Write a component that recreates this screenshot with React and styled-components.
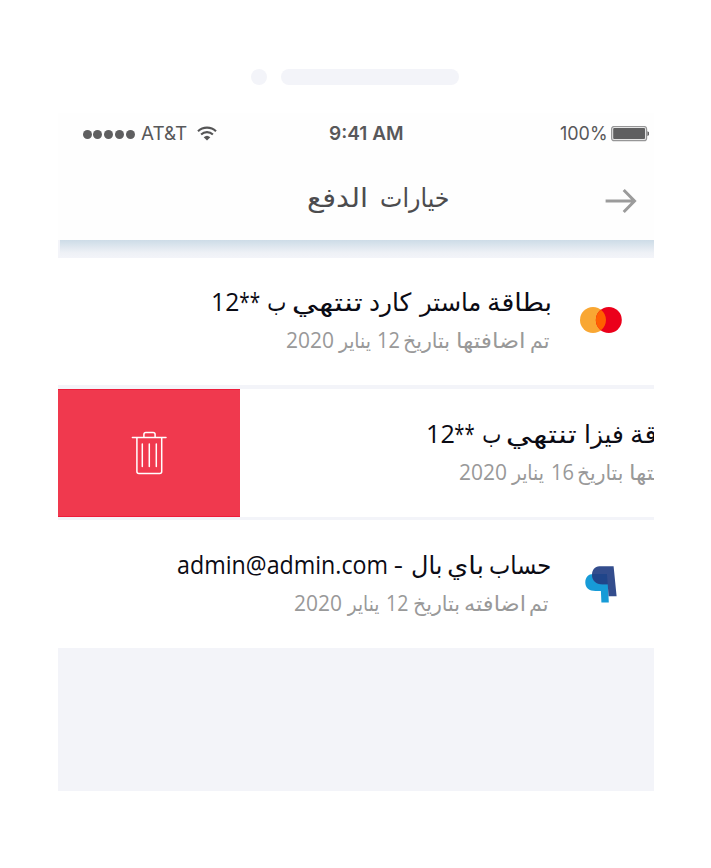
import React, { useLayoutEffect, useRef, useState } from "react";
import styled, { createGlobalStyle } from "styled-components";

const Global = createGlobalStyle`
  * { box-sizing: border-box; }
  body { margin: 0; background: #fff; }
`;

const Page = styled.div`
  width: 711px;
  height: 868px;
  padding: 69px 57px 0 58px;
  overflow: hidden;
  background: #fff;
  font-family: "Open Sans", "DejaVu Sans", sans-serif;
`;
const Earpiece = styled.div`
  display: flex;
  gap: 14px;
  height: 16px;
  margin: 0 0 28px 193.4px;
`;
const Slot = styled.div`
  width: ${(p) => p.$width}px;
  height: 16px;
  border-radius: 8px;
  background: #f3f4f9;
`;
const Screen = styled.main`
  width: 596px;
  height: 678px;
  overflow: hidden;
  background: #f3f4f9;
`;
const Header = styled.header`
  height: 127px;
  background: #fefefe;
`;
const StatusBar = styled.div`
  display: flex;
  align-items: center;
  height: 42px;
  padding: 0 5.5px 0 24.5px;
  color: #58585a;
  font: 400 19px/24px Inter, sans-serif;
`;
const Carrier = styled.div`
  display: flex;
  align-items: center;
  width: 246.5px;
`;
const Signal = styled.div`
  display: flex;
  gap: 1.9px;
  margin-right: 6px;
`;
const Dot = styled.i`
  width: 9px;
  height: 9px;
  border-radius: 50%;
  background: #5f5f60;
`;
const WifiIcon = styled.svg`
  margin: -2px 0 0 10px;
`;
const Clock = styled.div`
  width: 75px;
  font-weight: 600;
`;
const Battery = styled.div`
  display: flex;
  align-items: center;
  gap: 5px;
  margin-left: auto;
`;
const TitleBar = styled.div`
  display: flex;
  align-items: center;
  justify-content: space-between;
  height: 85px;
  padding: 6px 17px 0 249.5px;
`;
const Title = styled.h1`
  display: flex;
  flex-direction: row-reverse;
  margin: -7px 0 0;
  color: #4c4c4e;
  font-size: 26px;
  line-height: 40px;
  font-weight: 400;
`;
const Shade = styled.div`
  height: 18px;
  margin-left: 2px;
  background: linear-gradient(#cddce7, #dfe7ef 38%, #eef1f6 70%, #f3f4f9);
`;
const List = styled.section`
  display: flex;
  flex-direction: column;
`;
const Row = styled.article`
  display: flex;
  flex: none;
  height: ${(p) => p.$height}px;
  margin-bottom: ${(p) => p.$gap || 0}px;
  overflow: hidden;
  background: #fff;
`;
const Card = styled.div`
  display: flex;
  flex: none;
  flex-direction: row-reverse;
  width: 596px;
  padding: ${(p) => p.$top}px 32px 0 0;
`;
const Brand = styled.div`
  flex: none;
  width: 42px;
  height: 62px;
  margin-left: 30px;
  padding-top: ${(p) => p.$top || 0}px;
`;
const Copy = styled.div`
  display: flex;
  flex-direction: column;
  align-items: flex-end;
`;
const Line = styled.div`
  display: flex;
  flex-direction: row-reverse;
  margin-right: ${(p) => p.$inset || 0}px;
`;
const Name = styled(Line)`
  color: #0b0b14;
  font-size: 25px;
  line-height: 38px;
`;
const Added = styled(Line)`
  color: #999;
  font-size: 21px;
  line-height: 40px;
`;
const Delete = styled.button`
  display: flex;
  flex: none;
  align-items: center;
  justify-content: center;
  width: 182px;
  padding: 0;
  border: solid #ee1c3a;
  border-width: 1px 0;
  background: #f0394e;
`;
const WordBox = styled.span`
  display: block;
  flex: none;
  width: ${(p) => p.$width}px;
  margin-right: ${(p) => p.$gap || 0}px;
  white-space: nowrap;
`;
const Ink = styled.span`
  display: inline-block;
  transform-origin: left center;
`;

const ruler = document.createElement("canvas").getContext("2d");

/* A word whose glyphs are stretched to fill its column exactly. */
function Word({ text, width, gap }) {
  const ref = useRef(null);
  const [transform, setTransform] = useState("none");
  useLayoutEffect(() => {
    const css = getComputedStyle(ref.current);
    ruler.font = `${css.fontWeight} ${css.fontSize} ${css.fontFamily}`;
    ruler.textAlign = "left";
    const m = ruler.measureText(text);
    const ink = m.actualBoundingBoxLeft + m.actualBoundingBoxRight;
    setTransform(`scaleX(${width / ink}) translateX(${m.actualBoundingBoxLeft}px)`);
  }, [text, width]);
  return (
    <WordBox $width={width} $gap={gap}>
      <Ink ref={ref} style={{ transform }}>{text}</Ink>
    </WordBox>
  );
}

const words = (list) =>
  list.map(([text, width, gap], i) => <Word key={i} text={text} width={width} gap={gap} />);

function Wifi() {
  return (
    <WifiIcon width="20" height="15" viewBox="0 0 20 15" fill="none" stroke="#555556" strokeWidth="2.1">
      <path d="M1 5.2a13 13 0 0 1 18 0" />
      <path d="M4.1 8.5a8.5 8.5 0 0 1 11.8 0" />
      <path d="M10 14.5 6.7 11.2a4.8 4.8 0 0 1 6.6 0Z" fill="#555556" stroke="none" />
    </WifiIcon>
  );
}

function BatteryIcon() {
  return (
    <svg width="38" height="16" viewBox="0 0 38 16">
      <rect x=".6" y=".5" width="35" height="14.2" rx="2.5" fill="#e4e4e4" stroke="#969697" strokeWidth="1.2" />
      <rect x="2.2" y="2.1" width="31.8" height="11" rx="1" fill="#5f5f60" />
      <path d="M36.4 5.2q2 .6 2 2.4t-2 2.4Z" fill="#626263" />
    </svg>
  );
}

function Arrow() {
  return (
    <svg width="32" height="26" viewBox="0 0 32 26" fill="none" stroke="#9b9b9b" strokeWidth="3">
      <path d="M.6 13h28.500M18.700 2 29.500 13l-10.800 11" />
    </svg>
  );
}

function Trash() {
  return (
    <svg width="36" height="44" viewBox="0 0 36 44" fill="none" stroke="#fff" strokeWidth="1.5" strokeLinecap="round">
      <path d="M1.4 6.500h33.600M12.900 6.500V3.500q0-2 2-2h7.200q2 0 2 2V6.500M5.900 6.500v33.900q0 2 2 2h20.800q2 0 2-2V6.500" />
      <path d="M11.300 13v22.600M18.300 13v22.600M25.300 13v22.600" />
    </svg>
  );
}

function Mastercard() {
  return (
    <svg width="42" height="42" viewBox="0 0 42 42">
      <circle cx="13" cy="21" r="13" fill="#f9a733" />
      <circle cx="28.8" cy="21" r="13" fill="#eb001b" />
      <path d="M20.9 10.7a13 13 0 0 1 0 20.6 13 13 0 0 1 0-20.6Z" fill="#ff5f00" />
    </svg>
  );
}

function Paypal() {
  return (
    <svg width="42" height="42" viewBox="0 0 42 42">
      <path d="M13 10h14.6l1.2 28.5h-7.4l-.5-11.6h-5.4C9 26.9 5.3 23.4 5.3 18.4S8.5 10 13 10Z" fill="#179bd7" />
      <path d="M19.4 2.2H33.6L36.6 32.2H28.6L27.7 20.3H22.5C16 20.3 12 16.5 12 10.9 12 5.7 14.9 2.2 19.4 2.2Z" fill="#334d8d" />
      <path d="M12.2 10H26.9L27.7 20.3H22.5C16.5 20.3 12 16.5 12.2 10Z" fill="#20458a" />
    </svg>
  );
}

export default function App() {
  return (
    <Page>
      <Global />
      <Earpiece><Slot $width={16} /><Slot $width={178} /></Earpiece>
      <Screen>
        <Header>
          <StatusBar>
            <Carrier>
              <Signal><Dot /><Dot /><Dot /><Dot /><Dot /></Signal>
              <Word text="AT&T" width={46} />
              <Wifi />
            </Carrier>
            <Clock><Word text="9:41 AM" width={74} /></Clock>
            <Battery><Word text="100%" width={46} /><BatteryIcon /></Battery>
          </StatusBar>
          <TitleBar>
            <Title>{words([["خيارات", 67.5], ["الدفع", 57.5, 16]])}</Title>
            <Arrow />
          </TitleBar>
        </Header>
        <Shade />
        <List>
          <Row $height={127} $gap={4}>
            <Card $top={24}>
              <Brand $top={16.5}><Mastercard /></Brand>
              <Copy>
                <Name>{words([["بطاقة", 62], ["ماستر", 62, 8], ["كارد", 41.5, 7], ["تنتهي", 70, 7], ["ب", 17, 7.5], ["**", 19.5, 8.5], ["12", 25, 2.5]])}</Name>
                <Added>{words([["تم", 18.5, 1], ["اضافتها", 66.5, 7.5], ["بتاريخ", 45, 7.5], ["12", 21, 5.5], ["يناير", 33, 6.5], ["2020", 46, 5.5]])}</Added>
              </Copy>
            </Card>
          </Row>
          <Row $height={128} $gap={3}>
            <Delete aria-label="حذف"><Trash /></Delete>
            <Card $top={25}>
              <Brand />
              <Copy>
                <Name $inset={39}>{words([["بطاقة", 62], ["فيزا", 37, 8], ["تنتهي", 70, 9], ["ب", 17, 7.5], ["**", 19, 8.5], ["12", 25.5, 2]])}</Name>
                <Added $inset={9}>{words([["تم", 18.5, 1], ["اضافتها", 66.5, 7], ["بتاريخ", 44.5, 7.5], ["16", 21, 5.5], ["يناير", 33, 7.5], ["2020", 46, 5.5]])}</Added>
              </Copy>
            </Card>
          </Row>
          <Row $height={128}>
            <Card $top={25}>
              <Brand $top={18.8}><Paypal /></Brand>
              <Copy>
                <Name>{words([["حساب", 60], ["باي", 34, 8.5], ["بال", 28.5, 7.5], ["-", 8, 8.5], ["admin@admin.com", 209, 8.5]])}</Name>
                <Added>{words([["تم", 18.5, 2], ["اضافته", 59, 6], ["بتاريخ", 45, 6], ["12", 20.5, 6.5], ["يناير", 32.5, 7], ["2020", 46, 6]])}</Added>
              </Copy>
            </Card>
          </Row>
        </List>
      </Screen>
    </Page>
  );
}
